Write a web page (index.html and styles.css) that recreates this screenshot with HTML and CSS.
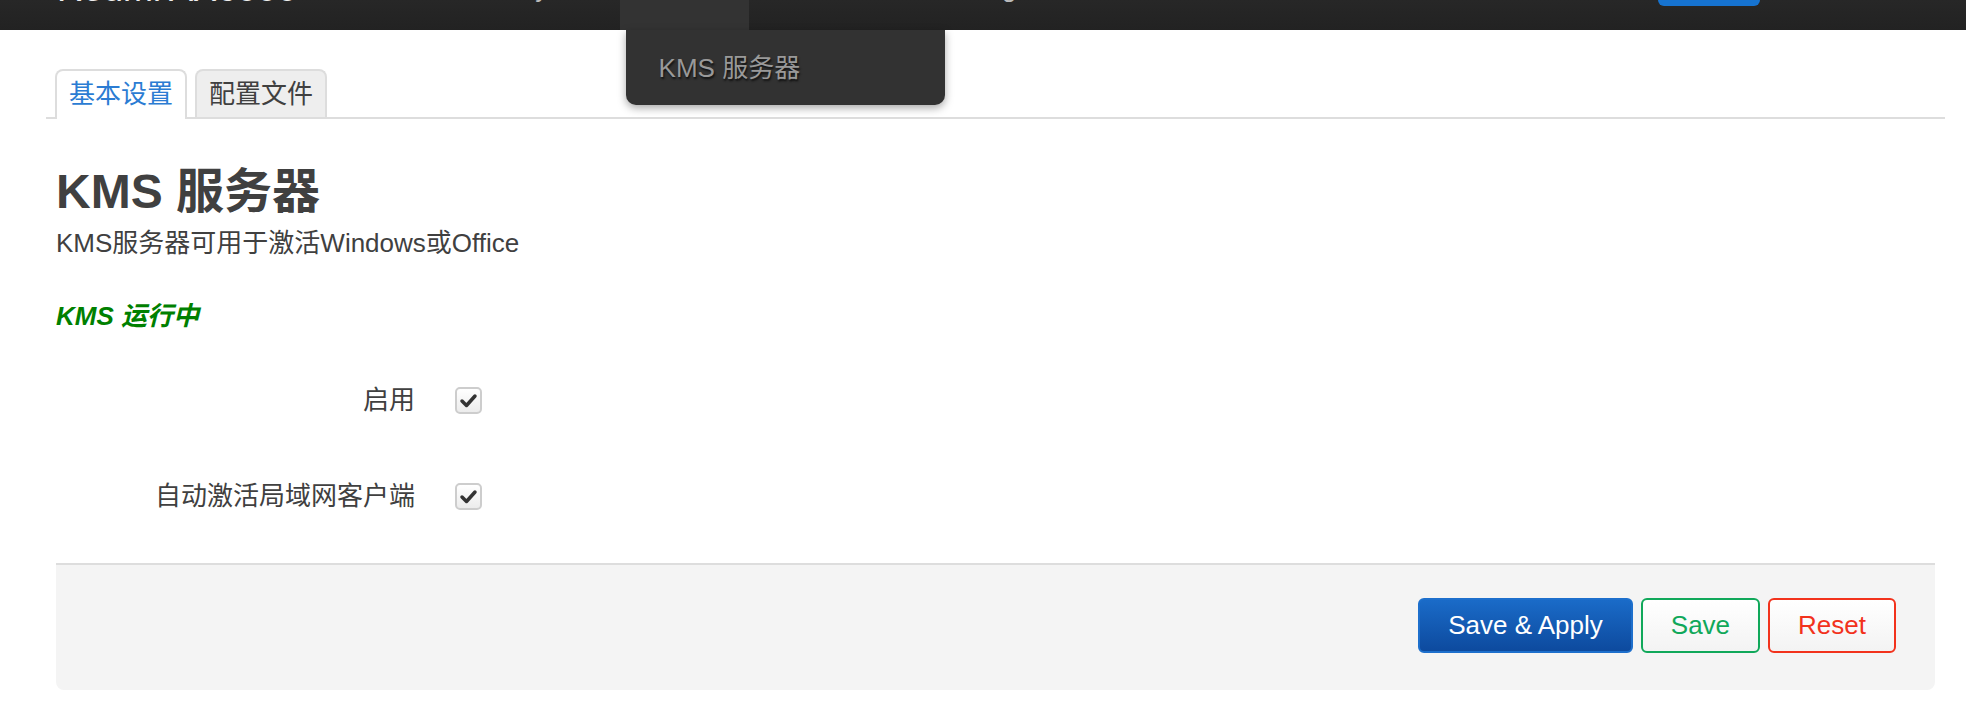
FILE: index.html
```html
<!DOCTYPE html>
<html lang="zh-CN">
<head>
  <meta charset="UTF-8">
  <title>KMS 服务器 - LuCI</title>
  <link rel="stylesheet" href="styles.css">
</head>
<body>
  <!-- Top navigation (page is scrolled, only the bottom of it shows) -->
  <header class="navbar">
    <a class="brand">Redmi AX6000</a>
    <ul class="nav">
      <li><a>Status</a></li>
      <li><a>System</a></li>
      <li class="active">
        <a>Services</a>
        <ul class="dropdown">
          <li><a>KMS 服务器</a></li>
        </ul>
      </li>
      <li><a>Network</a></li>
      <li><a>VPN</a></li>
      <li><a>Logout</a></li>
    </ul>
    <span class="indicator"></span>
  </header>

  <main class="main">
    <ul class="tabs">
      <li class="active">基本设置</li>
      <li>配置文件</li>
    </ul>

    <div class="content">
      <h2>KMS 服务器</h2>
      <p class="desc">KMS服务器可用于激活Windows或Office</p>
      <p class="status">KMS 运行中</p>

      <div class="fields">
        <div class="field">
          <label>启用</label>
          <span class="cbox">
            <svg viewBox="0 0 27 27" width="27" height="27"><polyline points="7,14 11.5,18.5 20,9" /></svg>
          </span>
        </div>
        <div class="field">
          <label>自动激活局域网客户端</label>
          <span class="cbox">
            <svg viewBox="0 0 27 27" width="27" height="27"><polyline points="7,14 11.5,18.5 20,9" /></svg>
          </span>
        </div>
      </div>

      <div class="actions">
        <button class="btn apply">Save &amp; Apply</button>
        <button class="btn save">Save</button>
        <button class="btn reset">Reset</button>
      </div>
    </div>
  </main>
</body>
</html>
```

FILE: styles.css
```css
/* Base */
* {
  box-sizing: border-box;
}

body {
  margin: 0;
  background: #fff;
  color: #404040;
  font-family: "Liberation Sans", "Noto Sans CJK SC", sans-serif;
  font-size: 26px;
}

ul {
  list-style: none;
  margin: 0;
  padding: 0;
}

/* Navbar */
.navbar {
  display: flex;
  height: 30px;
  background: linear-gradient(#272727, #222);
}

.brand {
  display: block;
  padding-left: 57px;
  margin-top: -29px;
  font-size: 36px;
  line-height: 36px;
  color: #eee;
  white-space: nowrap;
}

.nav {
  display: flex;
  margin-left: 102px;
}

.nav > li {
  position: relative;
  height: 30px;
}

.nav > li > a {
  display: block;
  padding: 0 15px;
  margin-top: -25px;
  line-height: 26px;
  color: #bbb;
  white-space: nowrap;
}

.nav > li.active {
  background: #333;
}

.dropdown {
  position: absolute;
  top: 30px;
  left: 6px;
  width: 319px;
  height: 75px;
  display: flex;
  align-items: center;
  background: #323232;
  border-radius: 0 0 10px 10px;
  box-shadow: 0 3px 8px rgba(0, 0, 0, 0.35);
  z-index: 5;
}

.dropdown a {
  display: block;
  padding-left: 33px;
  color: #999;
  line-height: 36px;
  text-shadow: 1px 2px 2px #111;
}

.indicator {
  display: block;
  margin-left: auto;
  margin-right: 206px;
  width: 102px;
  height: 6px;
  background: #1673d0;
  border-radius: 0 0 8px 8px;
}

/* Main area */
.main {
  margin: 39px 21px 0 46px;
}

.tabs {
  display: flex;
  gap: 8px;
  padding-left: 9px;
  border-bottom: 2px solid #ddd;
}

.tabs li {
  height: 48px;
  margin-bottom: -2px;
  padding: 0 12px;
  border: 2px solid #ddd;
  border-bottom: none;
  border-radius: 8px 8px 0 0;
  background: #eee;
  line-height: 46px;
  color: #404040;
}

.tabs li.active {
  height: 50px;
  background: #fff;
  color: #2b7cd3;
}

.content {
  padding: 0 10px;
}

h2 {
  margin: 45px 0 0;
  font-size: 48px;
  line-height: 56px;
  font-weight: bold;
  color: #404040;
}

.desc {
  margin: 5px 0 0;
  line-height: 36px;
}

.status {
  margin: 37px 0 0;
  line-height: 36px;
  font-weight: bold;
  font-style: italic;
  color: #008000;
}

/* Form rows */
.fields {
  margin-top: 18px;
}

.field {
  display: flex;
  align-items: center;
  gap: 40px;
  height: 96px;
}

.field label {
  width: 359px;
  text-align: right;
  line-height: 36px;
}

.cbox {
  display: block;
  width: 27px;
  height: 27px;
  border: 2px solid #cdcdcd;
  border-radius: 5px;
  background: linear-gradient(#fff, #ececec);
}

.cbox svg {
  display: block;
  margin: -2px;
}

.cbox polyline {
  fill: none;
  stroke: #333;
  stroke-width: 3.5;
  stroke-linecap: round;
  stroke-linejoin: round;
}

/* Action bar */
.actions {
  display: flex;
  justify-content: flex-end;
  gap: 8px;
  margin-top: 19px;
  padding: 33px 39px 37px;
  border-top: 2px solid #ddd;
  border-radius: 0 0 8px 8px;
  background: #f4f4f4;
}

.btn {
  height: 55px;
  padding: 0 28px;
  border: 2px solid;
  border-radius: 6px;
  font-family: "Liberation Sans", sans-serif;
  font-size: 26px;
  cursor: pointer;
}

.btn.apply {
  border-color: #1d6fcc;
  background: linear-gradient(#1a6bc8, #0d4a9e);
  color: #fff;
}

.btn.save {
  border-color: #10a85a;
  background: linear-gradient(#fff, #f3f3f3);
  color: #10a85a;
}

.btn.reset {
  border-color: #f2321c;
  background: linear-gradient(#fff, #f3f3f3);
  color: #f2321c;
}
```
